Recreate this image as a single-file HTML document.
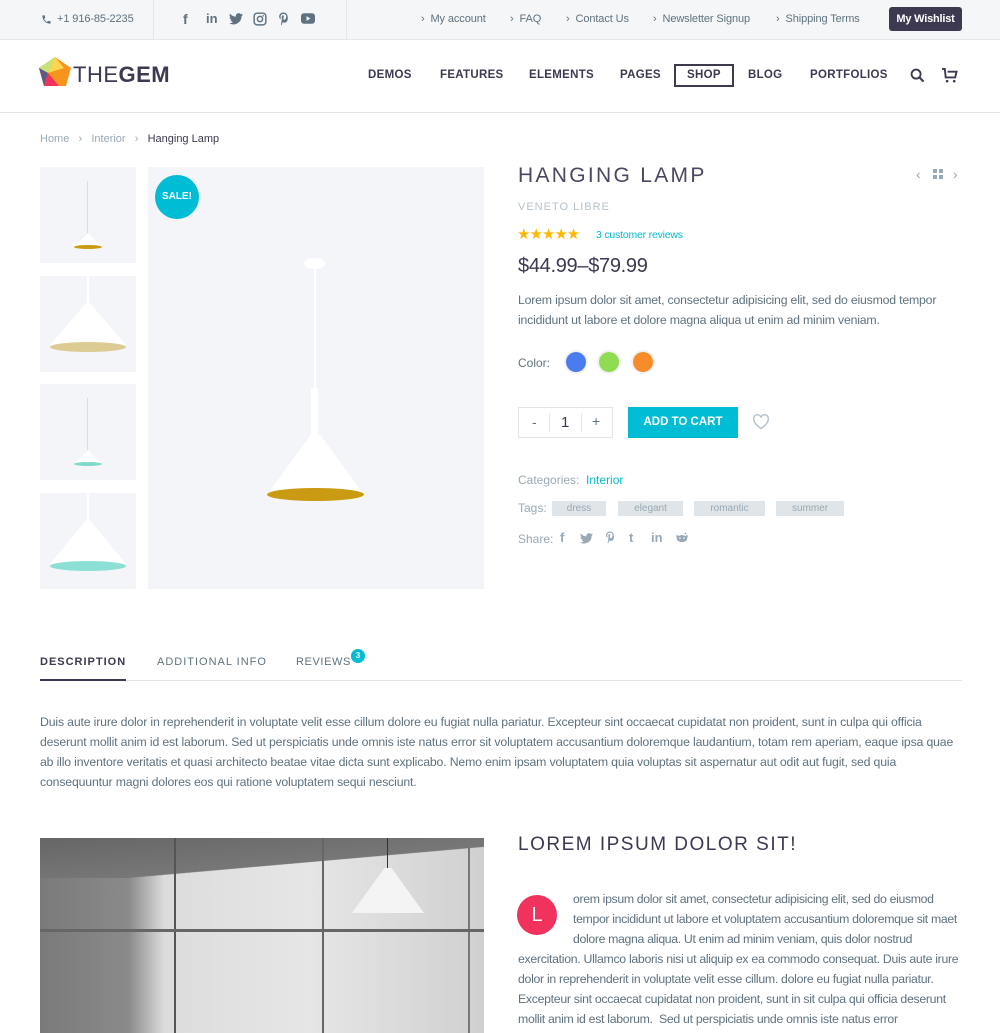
<!DOCTYPE html>
<html><head><meta charset="utf-8"><style>
*{margin:0;padding:0;box-sizing:border-box}
body{width:1000px;height:1033px;overflow:hidden;background:#fff;font-family:"Liberation Sans",sans-serif;color:#5f727f;position:relative}
.a{position:absolute}
.top{left:0;top:0;width:1000px;height:40px;background:#f4f6f7;border-bottom:1px solid #e3e7ea}
.tl{font-size:11px;color:#5f727f;top:13px;white-space:nowrap;letter-spacing:-.1px}
.nav{font-size:11.5px;font-weight:bold;color:#3c3950;top:69px;letter-spacing:.3px}
.p{font-size:12.3px;line-height:20px;color:#5f727f;letter-spacing:-.2px}
.thumb{background:#f4f5f8;width:96px;height:96px;left:40px}
.tag{background:#dfe5e8;color:#99a9b5;font-size:10px;height:15px;line-height:15px;text-align:center;top:501px}
.sh{top:530px;font-size:13px;color:#99a9b5;font-weight:bold}
</style></head><body>
<div class="a top"></div>
<div class="a" style="left:153px;top:0;width:1px;height:40px;background:#e3e7ea"></div>
<div class="a" style="left:346px;top:0;width:1px;height:40px;background:#e3e7ea"></div>
<svg class="a" style="left:41px;top:14px" width="11" height="11" viewBox="0 0 24 24"><path d="M6.6 10.8c1.4 2.8 3.8 5.1 6.6 6.6l2.2-2.2c.3-.3.7-.4 1-.2 1.1.4 2.3.6 3.6.6.6 0 1 .4 1 1V20c0 .6-.4 1-1 1C10.6 21 3 13.4 3 4c0-.6.4-1 1-1h3.5c.6 0 1 .4 1 1 0 1.3.2 2.5.6 3.6.1.3 0 .7-.2 1z" fill="#5f727f"/></svg>
<div class="a tl" style="left:57px">+1 916-85-2235</div>
<div class="a" style="left:183px;top:11px;font-size:14px;font-weight:bold;color:#5f727f">f</div>
<div class="a" style="left:206px;top:11px;font-size:13px;font-weight:bold;color:#5f727f">in</div>
<svg class="a" style="left:229px;top:13px" width="14" height="12" viewBox="0 0 24 20"><path d="M24 2.4c-.9.4-1.8.7-2.8.8 1-.6 1.8-1.6 2.2-2.7-1 .6-2 1-3.1 1.2A4.9 4.9 0 0 0 11.9 6C7.8 5.8 4.2 3.9 1.7.9c-1.4 2.3-.6 5 1.5 6.5-.8 0-1.6-.2-2.2-.6 0 2.4 1.7 4.4 3.9 4.8-.7.2-1.5.2-2.2.1.6 2 2.4 3.4 4.6 3.4A9.9 9.9 0 0 1 0 17.1 14 14 0 0 0 21.5 5c1-.7 1.8-1.6 2.5-2.6z" fill="#5f727f"/></svg>
<svg class="a" style="left:253px;top:12px" width="14" height="14" viewBox="0 0 24 24"><rect x="2" y="2" width="20" height="20" rx="5" fill="none" stroke="#5f727f" stroke-width="2.5"/><circle cx="12" cy="12" r="4.5" fill="none" stroke="#5f727f" stroke-width="2.5"/><circle cx="17.5" cy="6.5" r="1.3" fill="#5f727f"/></svg>
<svg class="a" style="left:278px;top:12px" width="11" height="14" viewBox="0 0 20 26"><path d="M10 1C4.5 1 2 5 2 8.5c0 2 .8 3.8 2.5 4.5l1-1c-.8-1-1-2-1-3.2C4.5 5.5 7 3.5 10 3.5c3.2 0 5 2 5 4.8 0 3.3-1.5 6-3.6 6-1.2 0-2-1-1.8-2.2.4-1.4 1-3 1-4 0-1-.5-1.8-1.6-1.8-1.3 0-2.3 1.3-2.3 3 0 1 .4 1.8.4 1.8L5.3 24l1.2.5 2.3-6.2c.6 1 1.6 1.6 3 1.6 3.7 0 6.2-3.5 6.2-8C18 5 15 1 10 1z" fill="#5f727f"/></svg>
<svg class="a" style="left:301px;top:13px" width="14" height="11" viewBox="0 0 24 18"><rect x="0" y="0" width="24" height="18" rx="5" fill="#5f727f"/><path d="M9.5 5v8l6.5-4z" fill="#f4f6f7"/></svg>
<div class="a tl" style="left:421px">›&nbsp; My account</div>
<div class="a tl" style="left:510px">›&nbsp; FAQ</div>
<div class="a tl" style="left:566px">›&nbsp; Contact Us</div>
<div class="a tl" style="left:653px">›&nbsp; Newsletter Signup</div>
<div class="a tl" style="left:776px">›&nbsp; Shipping Terms</div>
<div class="a" style="left:889px;top:7px;width:73px;height:24px;background:#3c3950;border-radius:3px;color:#fff;font-size:11px;font-weight:bold;text-align:center;line-height:24px;letter-spacing:-.2px">My Wishlist</div>

<svg class="a" style="left:39px;top:57px" width="32" height="30" viewBox="0 0 32 30"><polygon points="16,0 32,11 27,29 5,29 0,11" fill="#f7941d"/><polygon points="16,0 0,11 9,16" fill="#c5e37a"/><polygon points="16,0 9,16 25,11" fill="#ffd54f"/><polygon points="0,11 9,16 5,29" fill="#5b5a85"/><polygon points="9,16 5,29 20,29" fill="#f0325c"/></svg>
<div class="a" style="left:73px;top:62px;font-size:22px;color:#3c3950;letter-spacing:.5px">THE<b>GEM</b></div>
<div class="a" style="left:0;top:112px;width:1000px;height:1px;background:#e3e7ea"></div>
<div class="a nav" style="left:368px">DEMOS</div>
<div class="a nav" style="left:440px">FEATURES</div>
<div class="a nav" style="left:529px">ELEMENTS</div>
<div class="a nav" style="left:620px">PAGES</div>
<div class="a" style="left:674px;top:64px;width:60px;height:23px;border:2px solid #3c3950"></div>
<div class="a nav" style="left:687px">SHOP</div>
<div class="a nav" style="left:748px">BLOG</div>
<div class="a nav" style="left:810px">PORTFOLIOS</div>
<svg class="a" style="left:910px;top:68px" width="15" height="15" viewBox="0 0 16 16"><circle cx="6.5" cy="6.5" r="4.8" fill="none" stroke="#3c3950" stroke-width="2"/><path d="M10 10l4.5 4.5" stroke="#3c3950" stroke-width="2.2"/></svg>
<svg class="a" style="left:941px;top:67px" width="17" height="17" viewBox="0 0 18 18"><path d="M1 2h3l1 9h10l1.5-6H7" fill="none" stroke="#3c3950" stroke-width="2"/><circle cx="6.5" cy="15" r="1.4" fill="#3c3950"/><circle cx="14" cy="15" r="1.4" fill="#3c3950"/></svg>

<div class="a" style="left:40px;top:133px;font-size:11px;color:#99a9b5">Home &nbsp;&nbsp;›&nbsp;&nbsp; Interior &nbsp;&nbsp;›&nbsp;&nbsp; <span style="color:#3c3950">Hanging Lamp</span></div>

<div class="a thumb" style="top:167px"><div class="a" style="left:47px;top:14px;width:1px;height:55px;background:#ddd"></div><div class="a" style="left:34px;top:66px;width:28px;height:14px;background:#fff;clip-path:polygon(50% 0,100% 100%,0 100%)"></div><div class="a" style="left:34px;top:78px;width:28px;height:4px;border-radius:50%;background:#c99a12"></div></div>
<div class="a thumb" style="top:276px"><div class="a" style="left:47px;top:0;width:2px;height:30px;background:#fff"></div><div class="a" style="left:10px;top:25px;width:76px;height:44px;background:#fff;clip-path:polygon(50% 0,100% 100%,0 100%)"></div><div class="a" style="left:10px;top:66px;width:76px;height:10px;border-radius:50%;background:#dccb93"></div></div>
<div class="a thumb" style="top:384px"><div class="a" style="left:47px;top:14px;width:1px;height:55px;background:#ddd"></div><div class="a" style="left:34px;top:66px;width:28px;height:14px;background:#fff;clip-path:polygon(50% 0,100% 100%,0 100%)"></div><div class="a" style="left:34px;top:78px;width:28px;height:4px;border-radius:50%;background:#7fd9cf"></div></div>
<div class="a thumb" style="top:493px"><div class="a" style="left:47px;top:0;width:2px;height:30px;background:#fff"></div><div class="a" style="left:10px;top:25px;width:76px;height:46px;background:#fff;clip-path:polygon(50% 0,100% 100%,0 100%)"></div><div class="a" style="left:10px;top:68px;width:76px;height:10px;border-radius:50%;background:#8bdfd5"></div></div>

<div class="a" style="left:148px;top:167px;width:336px;height:422px;background:#f4f5f8"></div>
<div class="a" style="left:155px;top:175px;width:44px;height:44px;border-radius:50%;background:#00bcd4;color:#fff;font-size:10px;font-weight:bold;text-align:center;line-height:44px">SALE!</div>
<div class="a" style="left:304px;top:258px;width:21px;height:11px;border-radius:50%;background:#fff"></div>
<div class="a" style="left:314px;top:266px;width:2px;height:124px;background:#fff"></div>
<div class="a" style="left:311px;top:388px;width:7px;height:50px;background:#fff"></div>
<div class="a" style="left:267px;top:435px;width:97px;height:60px;background:#fff;clip-path:polygon(45% 0,55% 0,100% 100%,0 100%)"></div>
<div class="a" style="left:267px;top:488px;width:97px;height:13px;border-radius:50%;background:#c99a12"></div>

<div class="a" style="left:518px;top:164px;font-size:21px;color:#4a4860;letter-spacing:2.3px">HANGING LAMP</div>
<div class="a" style="left:916px;top:166px;font-size:14px;color:#99a9b5">‹</div>
<div class="a" style="left:933px;top:169px;width:4px;height:4px;background:#99a9b5;box-shadow:6px 0 #99a9b5,0 6px #99a9b5,6px 6px #99a9b5"></div>
<div class="a" style="left:953px;top:166px;font-size:14px;color:#99a9b5">›</div>
<div class="a" style="left:518px;top:201px;font-size:11px;color:#b6c2ca;letter-spacing:1px">VENETO LIBRE</div>
<div class="a" style="left:517px;top:225px;font-size:15px;color:#ffb800;letter-spacing:-1px">★★★★★</div>
<div class="a" style="left:596px;top:229px;font-size:10.5px;color:#00bcd4;letter-spacing:-.2px">3 customer reviews</div>
<div class="a" style="left:518px;top:255px;font-size:20px;color:#3c3950;letter-spacing:-.3px">$44.99–$79.99</div>
<div class="a p" style="left:518px;top:290px;width:450px">Lorem ipsum dolor sit amet, consectetur adipisicing elit, sed do eiusmod tempor incididunt ut labore et dolore magna aliqua ut enim ad minim veniam.</div>
<div class="a" style="left:518px;top:356px;font-size:12px">Color:</div>
<div class="a" style="left:566px;top:352px;width:20px;height:20px;border-radius:50%;background:#4a7cf0;box-shadow:0 0 0 2px #f0f2f4"></div>
<div class="a" style="left:599px;top:352px;width:20px;height:20px;border-radius:50%;background:#8fdc52;box-shadow:0 0 0 2px #f0f2f4"></div>
<div class="a" style="left:633px;top:352px;width:20px;height:20px;border-radius:50%;background:#f98c2a;box-shadow:0 0 0 2px #f0f2f4"></div>
<div class="a" style="left:518px;top:407px;width:95px;height:31px;border:1px solid #dfe5e8;font-size:14px;color:#5f727f"><span class="a" style="left:13px;top:6px">-</span><span class="a" style="left:30px;top:5px;width:1px;height:19px;background:#e3e7ea"></span><span class="a" style="left:42px;top:6px;font-size:15px;color:#3c3950">1</span><span class="a" style="left:62px;top:5px;width:1px;height:19px;background:#e3e7ea"></span><span class="a" style="left:73px;top:5px">+</span></div>
<div class="a" style="left:628px;top:407px;width:110px;height:31px;background:#00bcd4;color:#fff;font-size:11.5px;font-weight:bold;text-align:center;line-height:31px">ADD TO CART</div>
<svg class="a" style="left:752px;top:414px" width="18" height="16" viewBox="0 0 24 22"><path d="M12 20S2 13.5 2 7.2A5 5 0 0 1 12 5a5 5 0 0 1 10 2.2C22 13.5 12 20 12 20z" fill="none" stroke="#b6c2ca" stroke-width="2"/></svg>
<div class="a" style="left:518px;top:473px;font-size:12px;color:#99a9b5">Categories: &nbsp;<span style="color:#00bcd4">Interior</span></div>
<div class="a" style="left:518px;top:501px;font-size:12px;color:#99a9b5">Tags:</div>
<div class="a tag" style="left:552px;width:54px">dress</div>
<div class="a tag" style="left:618px;width:65px">elegant</div>
<div class="a tag" style="left:694px;width:71px">romantic</div>
<div class="a tag" style="left:776px;width:68px">summer</div>
<div class="a" style="left:518px;top:532px;font-size:12px;color:#99a9b5">Share:</div>
<div class="a sh" style="left:560px">f</div>
<svg class="a" style="left:580px;top:533px" width="13" height="11" viewBox="0 0 24 20"><path d="M24 2.4c-.9.4-1.8.7-2.8.8 1-.6 1.8-1.6 2.2-2.7-1 .6-2 1-3.1 1.2A4.9 4.9 0 0 0 11.9 6C7.8 5.8 4.2 3.9 1.7.9c-1.4 2.3-.6 5 1.5 6.5-.8 0-1.6-.2-2.2-.6 0 2.4 1.7 4.4 3.9 4.8-.7.2-1.5.2-2.2.1.6 2 2.4 3.4 4.6 3.4A9.9 9.9 0 0 1 0 17.1 14 14 0 0 0 21.5 5c1-.7 1.8-1.6 2.5-2.6z" fill="#99a9b5"/></svg>
<svg class="a" style="left:605px;top:531px" width="10" height="13" viewBox="0 0 20 26"><path d="M10 1C4.5 1 2 5 2 8.5c0 2 .8 3.8 2.5 4.5l1-1c-.8-1-1-2-1-3.2C4.5 5.5 7 3.5 10 3.5c3.2 0 5 2 5 4.8 0 3.3-1.5 6-3.6 6-1.2 0-2-1-1.8-2.2.4-1.4 1-3 1-4 0-1-.5-1.8-1.6-1.8-1.3 0-2.3 1.3-2.3 3 0 1 .4 1.8.4 1.8L5.3 24l1.2.5 2.3-6.2c.6 1 1.6 1.6 3 1.6 3.7 0 6.2-3.5 6.2-8C18 5 15 1 10 1z" fill="#99a9b5"/></svg>
<div class="a sh" style="left:629px">t</div>
<div class="a sh" style="left:651px">in</div>
<svg class="a" style="left:675px;top:532px" width="14" height="11" viewBox="0 0 24 18"><ellipse cx="12" cy="11" rx="9" ry="6" fill="#99a9b5"/><circle cx="4" cy="7" r="2" fill="#99a9b5"/><circle cx="20" cy="7" r="2" fill="#99a9b5"/><circle cx="18" cy="2" r="1.5" fill="#99a9b5"/><circle cx="8.5" cy="10" r="1.3" fill="#fff"/><circle cx="15.5" cy="10" r="1.3" fill="#fff"/></svg>

<div class="a" style="left:40px;top:656px;font-size:11px;font-weight:bold;color:#3c3950;letter-spacing:1px">DESCRIPTION</div>
<div class="a" style="left:157px;top:656px;font-size:11px;color:#5f727f;letter-spacing:1px">ADDITIONAL INFO</div>
<div class="a" style="left:296px;top:656px;font-size:11px;color:#5f727f;letter-spacing:.6px">REVIEWS</div>
<div class="a" style="left:351px;top:649px;width:14px;height:14px;border-radius:50%;background:#00bcd4;color:#fff;font-size:8px;text-align:center;line-height:14px;font-weight:bold">3</div>
<div class="a" style="left:40px;top:680px;width:922px;height:1px;background:#e3e7ea"></div>
<div class="a" style="left:40px;top:679px;width:86px;height:2px;background:#3c3950"></div>
<div class="a p" style="left:40px;top:712px;width:924px;letter-spacing:-.17px">Duis aute irure dolor in reprehenderit in voluptate velit esse cillum dolore eu fugiat nulla pariatur. Excepteur sint occaecat cupidatat non proident, sunt in culpa qui officia deserunt mollit anim id est laborum. Sed ut perspiciatis unde omnis iste natus error sit voluptatem accusantium doloremque laudantium, totam rem aperiam, eaque ipsa quae ab illo inventore veritatis et quasi architecto beatae vitae dicta sunt explicabo. Nemo enim ipsam voluptatem quia voluptas sit aspernatur aut odit aut fugit, sed quia consequuntur magni dolores eos qui ratione voluptatem sequi nesciunt.</div>

<div class="a" style="left:40px;top:838px;width:444px;height:195px;background:linear-gradient(90deg,#7a7a7a 0,#8a8a8a 20%,#dcdcdc 28%,#e6e6e6 60%,#d0d0d0 100%);overflow:hidden">
<div class="a" style="left:0;top:0;width:444px;height:40px;background:linear-gradient(175deg,#666 0,#777 60%,transparent 61%)"></div>
<div class="a" style="left:134px;top:0;width:2px;height:195px;background:#555"></div>
<div class="a" style="left:282px;top:0;width:2px;height:195px;background:#666"></div>
<div class="a" style="left:428px;top:0;width:2px;height:195px;background:#777"></div>
<div class="a" style="left:0;top:91px;width:444px;height:3px;background:#666"></div>
<div class="a" style="left:347px;top:0;width:1px;height:30px;background:#333"></div>
<div class="a" style="left:312px;top:30px;width:72px;height:45px;background:#f4f4f4;clip-path:polygon(45% 0,55% 0,100% 100%,0 100%)"></div>
</div>
<div class="a" style="left:518px;top:834px;font-size:19px;color:#3c3950;letter-spacing:1.5px">LOREM IPSUM DOLOR SIT!</div>
<div class="a" style="left:517px;top:895px;width:40px;height:40px;border-radius:50%;background:#f0325c;color:#fff;font-size:20px;text-align:center;line-height:40px">L</div>
<div class="a p" style="left:573px;top:889px;width:398px;letter-spacing:-.35px">orem ipsum dolor sit amet, consectetur adipisicing elit, sed do eiusmod tempor incididunt ut labore et voluptatem accusantium doloremque sit maet dolore magna aliqua. Ut enim ad minim veniam, quis dolor nostrud</div>
<div class="a p" style="left:518px;top:949px;width:452px;letter-spacing:-.3px">exercitation. Ullamco laboris nisi ut aliquip ex ea commodo consequat. Duis aute irure dolor in reprehenderit in voluptate velit esse cillum. dolore eu fugiat nulla pariatur. Excepteur sint occaecat cupidatat non proident, sunt in sit culpa qui officia deserunt mollit anim id est laborum.&nbsp; Sed ut perspiciatis unde omnis iste natus error</div>
</body></html>
